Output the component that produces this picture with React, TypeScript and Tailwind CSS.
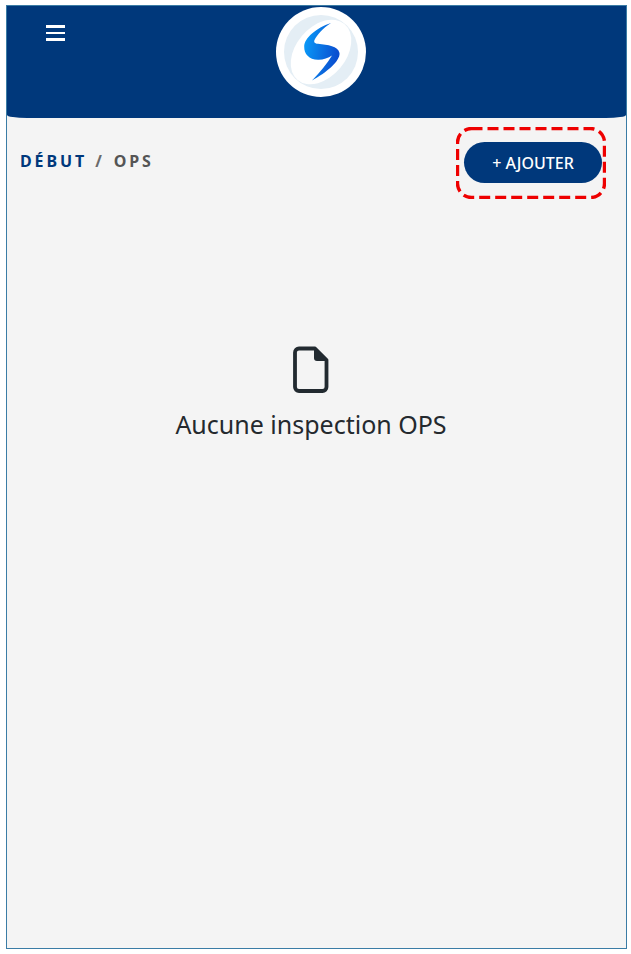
import React from "react";

function Logo() {
  return (
    <svg width="90" height="90" viewBox="0 0 90 90" className="block">
      <defs>
        <linearGradient id="lg" x1="0" y1="0" x2="1" y2="0.25">
          <stop offset="0" stopColor="#0aa0fb" />
          <stop offset="1" stopColor="#0a4fd0" />
        </linearGradient>
      </defs>
      <circle cx="45" cy="45" r="45" fill="#ffffff" />
      <circle cx="45" cy="45" r="37" fill="#e4eef5" />
      <ellipse cx="45" cy="45" rx="25" ry="36.5" transform="rotate(40 45 45)" fill="#ffffff" />
      <path
        d="M55 16 C47 21 41 28 38.5 33 C37.5 35.5 39 36.5 42 36.8 C52 38 62 39 63.5 46 C64.5 54 50 66 36 73.5 C44 65 51 57 56 48.5 C52 51 47 53 42 52.8 C33 52.5 28 47 28.2 39.5 C28.5 31 40 21 55 16 Z"
        fill="url(#lg)"
      />
    </svg>
  );
}

export default function App() {
  return (
    <div className="h-[954px] w-[631px] bg-white pt-[5px] pl-[6px] font-['Noto_Sans','Open_Sans',sans-serif]">
      <div className="flex h-[944px] w-[621px] flex-col border border-[#3a7ca5] bg-[#f4f4f4]">
        <header className="relative flex h-[112px] shrink-0 items-start justify-center rounded-b-[20px_3px] bg-[#00387b]">
          <button className="absolute top-[19px] left-[39px] flex w-[19px] flex-col gap-[4px]">
            <span className="h-[3px] bg-white" />
            <span className="h-[2px] bg-white" />
            <span className="h-[3px] bg-white" />
          </button>
          <div className="mt-[1px] ml-[8px]">
            <Logo />
          </div>
        </header>
        <div className="flex items-start justify-between pt-[24px] pr-[24px] pl-[13px]">
          <nav className="mt-[9px] flex items-center text-[16px] leading-[20px] font-bold tracking-[2.9px]">
            <span className="text-[#00387b]">DÉBUT</span>
            <span className="ml-[8px] text-[#6b6b6b]">/</span>
            <span className="ml-[9px] text-[#555555]">OPS</span>
          </nav>
          <div className="relative">
            <button className="flex h-[41px] w-[138px] items-center justify-center rounded-full bg-[#00387b] text-[16px] font-medium text-white">
              + AJOUTER
            </button>
            <svg width="150" height="72" viewBox="0 0 150 72" className="absolute top-[-15px] left-[-8px]">
              <rect x="1.5" y="1.5" width="147" height="69" rx="14" fill="none" stroke="#ee0000" strokeWidth="3.4" strokeDasharray="11 5" />
            </svg>
          </div>
        </div>
        <div className="mt-[163px] flex flex-col items-center pr-[11px]">
          <svg width="36" height="48" viewBox="0 0 36 48" className="block">
            <path
              d="M6 2.5 H22 L33.5 14 V41 a4 4 0 0 1 -4 4 H6 a4 4 0 0 1 -4 -4 V6.5 a4 4 0 0 1 4 -4 Z"
              fill="none"
              stroke="#222a30"
              strokeWidth="3.8"
              strokeLinejoin="round"
            />
            <path d="M21 2.5 L33.5 15 H24 a3 3 0 0 1 -3 -3 Z" fill="#222a30" />
          </svg>
          <p className="mt-[12px] text-[25px] leading-[36px] text-[#24292e]">Aucune inspection OPS</p>
        </div>
      </div>
    </div>
  );
}
